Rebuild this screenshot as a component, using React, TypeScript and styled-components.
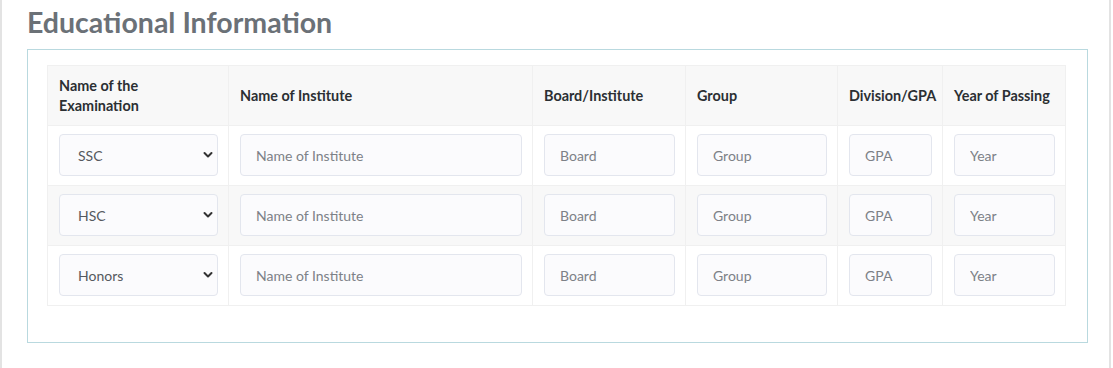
import React from 'react'
import styled, { createGlobalStyle } from 'styled-components'

const GlobalStyle = createGlobalStyle`
  html, body {
    margin: 0;
    padding: 0;
    background: #ffffff;
    font-family: Lato, 'Noto Sans', sans-serif;
  }
`

const Page = styled.div`
  width: 1111px;
  min-height: 368px;
  box-sizing: border-box;
  border-left: 2px solid #e3e3e3;
  border-right: 2px solid #e3e3e3;
  padding: 4px 21px 0 25px;
`

const Title = styled.h2`
  margin: 0;
  font-size: 28.5px;
  line-height: 36px;
  font-weight: 700;
  color: #6b7177;
`

const Panel = styled.div`
  margin-top: 9px;
  border: 1px solid #b9d9df;
  padding: 15px 21px 36px 19px;
`

const Table = styled.table`
  width: 100%;
  border-collapse: collapse;
  table-layout: fixed;
`

const HeadRow = styled.tr`
  background: #f8f8f8;
  height: 60px;
`

const BodyRow = styled.tr<{ striped?: boolean }>`
  background: ${({ striped }) => (striped ? '#f8f8f8' : '#ffffff')};
  height: 60px;
`

const Th = styled.th`
  border: 1px solid #f0f0f0;
  padding: 9px 10px 9px 11px;
  text-align: left;
  vertical-align: middle;
  font-size: 14.4px;
  line-height: 20px;
  font-weight: 700;
  color: #2b2f33;
`

const Td = styled.td`
  border: 1px solid #f0f0f0;
  padding: 8px 10px 9px 11px;
  vertical-align: top;
`

const Field = styled.input`
  display: block;
  width: 100%;
  height: 42px;
  box-sizing: border-box;
  border: 1px solid #e3e6ee;
  border-radius: 4px;
  background: #fbfbfd;
  padding: 0 15px;
  font-family: inherit;
  font-size: 14px;
  color: #555;
  outline: none;

  &::placeholder {
    color: #7d8187;
  }
`

const SelectWrap = styled.div`
  position: relative;
`

const Select = styled.select`
  display: block;
  width: 100%;
  height: 42px;
  box-sizing: border-box;
  appearance: none;
  border: 1px solid #e3e6ee;
  border-radius: 4px;
  background: #fbfbfd;
  padding: 0 18px;
  font-family: inherit;
  font-size: 14px;
  color: #55595e;
  outline: none;
`

const Chevron = styled.svg`
  position: absolute;
  right: 5px;
  top: 17px;
  width: 10px;
  height: 8px;
  pointer-events: none;
`

const columns = [
  { label: 'Name of the Examination', width: 181 },
  { label: 'Name of Institute', width: 304 },
  { label: 'Board/Institute', width: 153 },
  { label: 'Group', width: 152 },
  { label: 'Division/GPA', width: 105 },
  { label: 'Year of Passing', width: 123 },
]

const exams = ['SSC', 'HSC', 'Honors']

function ExamSelect({ value }: { value: string }) {
  return (
    <SelectWrap>
      <Select defaultValue={value}>
        {exams.map(e => (
          <option key={e}>{e}</option>
        ))}
      </Select>
      <Chevron viewBox="0 0 10 8">
        <path d="M1.5 2 L5 5.5 L8.5 2" fill="none" stroke="#333" strokeWidth="2" strokeLinecap="round" strokeLinejoin="round" />
      </Chevron>
    </SelectWrap>
  )
}

export default function App() {
  return (
    <>
      <GlobalStyle />
      <Page>
        <Title>Educational Information</Title>
        <Panel>
          <Table>
            <colgroup>
              {columns.map(c => (
                <col key={c.label} style={{ width: c.width }} />
              ))}
            </colgroup>
            <thead>
              <HeadRow>
                <Th>
                  Name of the
                  <br />
                  Examination
                </Th>
                {columns.slice(1).map(c => (
                  <Th key={c.label}>{c.label}</Th>
                ))}
              </HeadRow>
            </thead>
            <tbody>
              {exams.map((exam, i) => (
                <BodyRow key={exam} striped={i === 1}>
                  <Td>
                    <ExamSelect value={exam} />
                  </Td>
                  <Td>
                    <Field placeholder="Name of Institute" />
                  </Td>
                  <Td>
                    <Field placeholder="Board" />
                  </Td>
                  <Td>
                    <Field placeholder="Group" />
                  </Td>
                  <Td>
                    <Field placeholder="GPA" />
                  </Td>
                  <Td>
                    <Field placeholder="Year" />
                  </Td>
                </BodyRow>
              ))}
            </tbody>
          </Table>
        </Panel>
      </Page>
    </>
  )
}
